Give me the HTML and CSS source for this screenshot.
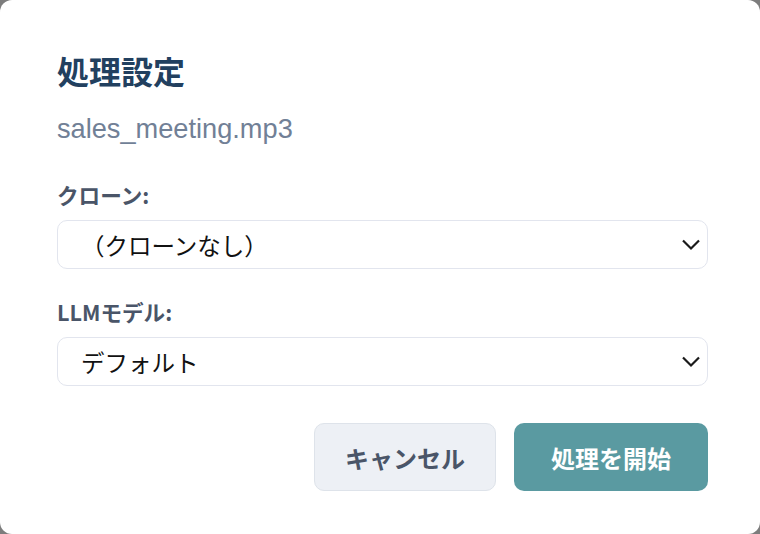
FILE: index.html
```html
<!DOCTYPE html>
<html lang="ja">
<head>
<meta charset="utf-8">
<title>処理設定</title>
<link rel="stylesheet" href="styles.css">
</head>
<body>
<div class="modal">
  <h1 class="title">処理設定</h1>
  <p class="filename">sales_meeting.mp3</p>
  <div class="field">
    <label class="label">クローン:</label>
    <div class="select">
      <span class="select-text">（クローンなし）</span>
      <svg class="chevron" width="20" height="12" viewBox="0 0 20 12"><path d="M2 1.5 L10 9.5 L18 1.5" fill="none" stroke="#1a1a1a" stroke-width="2.2"/></svg>
    </div>
  </div>
  <div class="field">
    <label class="label">LLMモデル:</label>
    <div class="select">
      <span class="select-text">デフォルト</span>
      <svg class="chevron" width="20" height="12" viewBox="0 0 20 12"><path d="M2 1.5 L10 9.5 L18 1.5" fill="none" stroke="#1a1a1a" stroke-width="2.2"/></svg>
    </div>
  </div>
  <div class="actions">
    <button class="btn btn-cancel">キャンセル</button>
    <button class="btn btn-primary">処理を開始</button>
  </div>
</div>
</body>
</html>
```
FILE: styles.css
```css
html, body {
  margin: 0;
  padding: 0;
  background: #7d7d7d;
}
.modal {
  box-sizing: border-box;
  width: 760px;
  height: 534px;
  background: #ffffff;
  border-radius: 12px;
  padding: 50px 52px 43px 57px;
  display: flex;
  flex-direction: column;
  font-family: "Noto Sans CJK JP", "Liberation Sans", sans-serif;
}
.title {
  margin: 0;
  font-size: 32px;
  line-height: 40px;
  font-weight: 700;
  color: #22405f;
}
.filename {
  margin: 23px 0 0;
  font-family: "Liberation Sans", "Noto Sans CJK JP", sans-serif;
  font-size: 27.2px;
  line-height: 32px;
  color: #718096;
}
.field {
  display: flex;
  flex-direction: column;
}
.field:first-of-type {
  margin-top: 36px;
}
.field + .field {
  margin-top: 29px;
}
.label {
  font-size: 21.6px;
  line-height: 28px;
  font-weight: 700;
  color: #4a5568;
}
.select {
  box-sizing: border-box;
  margin-top: 11px;
  height: 49px;
  border: 1px solid #e2e5ee;
  border-radius: 10px;
  padding: 0 6px 0 23px;
  display: flex;
  align-items: center;
  justify-content: space-between;
}
.select-text {
  font-size: 23.5px;
  color: #111111;
}
.chevron {
  display: block;
}
.actions {
  margin-top: 37px;
  display: flex;
  justify-content: flex-end;
  gap: 18px;
}
.btn {
  box-sizing: border-box;
  height: 68px;
  border-radius: 10px;
  font-family: "Noto Sans CJK JP", sans-serif;
  font-size: 24px;
  font-weight: 700;
  cursor: pointer;
}
.btn-cancel {
  background: #edf0f5;
  border: 1px solid #dee3ea;
  color: #4a5568;
  width: 182px;
}
.btn-primary {
  background: #5a9aa1;
  border: none;
  color: #ffffff;
  width: 194px;
}
```
